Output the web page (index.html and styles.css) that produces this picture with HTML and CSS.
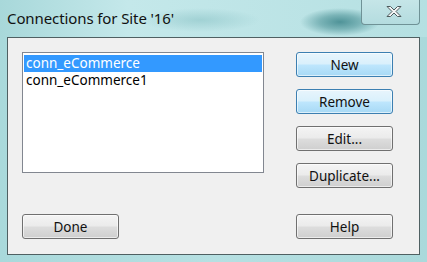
FILE: index.html
```html
<!DOCTYPE html>
<html lang="en">
<head>
  <meta charset="UTF-8" />
  <title>Connections for Site '16'</title>
  <link rel="stylesheet" href="styles.css">
</head>
<body>
  <div class="window">
    <div class="titlebar">
      <span class="title">Connections for Site '16'</span>
      <button class="close" aria-label="Close">
        <svg width="18" height="13" viewBox="0 0 18 13">
          <path d="M2 1.5 L5.5 1.5 L9 5 L12.5 1.5 L16 1.5 L11 6.5 L16 11.5 L12.5 11.5 L9 8 L5.5 11.5 L2 11.5 L7 6.5 Z" fill="#f4f6f6" stroke="#4d5a5c" stroke-width="1" stroke-linejoin="round"/>
        </svg>
      </button>
    </div>
    <div class="client">
      <div class="top">
        <ul class="listbox">
          <li class="selected">conn_eCommerce</li>
          <li>conn_eCommerce1</li>
        </ul>
        <div class="actions">
          <button class="btn btn-blue">New</button>
          <button class="btn btn-blue">Remove</button>
          <button class="btn">Edit...</button>
          <button class="btn">Duplicate...</button>
        </div>
      </div>
      <div class="bottom">
        <button class="btn">Done</button>
        <button class="btn">Help</button>
      </div>
    </div>
  </div>
</body>
</html>
```

FILE: styles.css
```css
/* Reset & Base */
* { margin: 0; padding: 0; box-sizing: border-box; }
body { width: 427px; height: 262px; overflow: hidden; font-family: "Noto Sans", "Open Sans", sans-serif; color: #000; }

/* Window frame */
.window { height: 262px; padding: 0 7px 7px; background: linear-gradient(90deg, #a9d9db 0%, #b6e0e2 50%, #aad9db 100%); }
.titlebar { height: 37px; margin: 0 -7px; padding: 0 7px; display: flex; justify-content: space-between; align-items: flex-start;
  background: radial-gradient(ellipse 40px 14px at 340px 22px, #4f9398 0%, rgba(95,160,164,0.7) 50%, rgba(180,224,226,0) 100%),
              radial-gradient(ellipse 60px 12px at 200px 20px, rgba(140,196,199,0.6) 0%, rgba(180,224,226,0) 100%),
              linear-gradient(90deg, #a8d8da 0%, #c4e8ea 30%, #b5e0e2 100%); }
.title { font-size: 15px; line-height: 37px; color: #111; letter-spacing: -0.1px; }
.close { width: 59px; height: 26px; margin-top: -1px; border: 1px solid #6f9296; border-top: none; border-radius: 0 0 4px 4px; background: linear-gradient(#c6e6e8, #b4dcdf); display: flex; align-items: center; justify-content: center; padding-left: 6px; }
.close svg { display: block; }

/* Client area */
.client { height: 218px; background: #f0f0f0; border: 1px solid #4f6062; padding: 14px 26px 0 14px; }
.top { display: flex; gap: 32px; }
.listbox { list-style: none; width: 242px; height: 121px; background: #fff; border: 1px solid #828790; padding: 2px 1px; font-size: 13.5px; }
.listbox li { height: 17px; line-height: 17px; padding-left: 2px; }
.listbox li.selected { background: #3399ff; color: #fff; }

/* Buttons */
.actions { display: flex; flex-direction: column; gap: 12px; }
.btn { width: 97px; height: 25px; font-family: "Noto Sans", "Open Sans", sans-serif; font-size: 13.5px; color: #111; border: 1px solid #707070; border-radius: 3px; background: linear-gradient(#f4f4f4 0%, #ebebeb 48%, #dddddd 52%, #cfcfcf 100%); box-shadow: inset 0 0 0 1px rgba(255,255,255,0.6); }
.btn-blue { border-color: #3c7fb1; background: linear-gradient(#e8f5fc 0%, #d9f0fc 48%, #bee6fd 52%, #a7d9f5 100%); }
.bottom { display: flex; justify-content: space-between; margin-top: 26px; }
```
